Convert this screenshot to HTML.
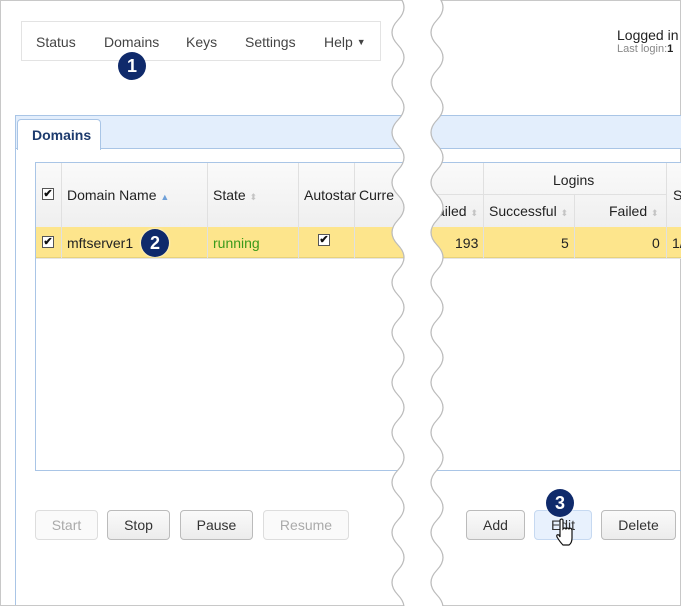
<!DOCTYPE html>
<html><head><meta charset="utf-8"><style>
*{box-sizing:border-box;margin:0;padding:0}
body{width:681px;height:606px;overflow:hidden;background:#fff;font-family:"Liberation Sans",Arial,sans-serif;font-size:14px;color:#333;position:relative}
.abs{position:absolute}
.frame{left:0;top:0;width:681px;height:606px;border:1px solid #c8c8c8}
.nav{left:21px;top:21px;width:360px;height:40px;border:1px solid #e3e3e3;background:#fff}
.nav span{position:absolute;top:12px;font-size:14px;color:#444}
.badge{position:absolute;width:28px;height:28px;border-radius:50%;background:#0f2a6b;color:#fff;font-weight:bold;font-size:18px;text-align:center;line-height:28px;box-shadow:0 0 2px #fff}
.panel{left:15px;top:115px;width:680px;height:490px;border:1px solid #a9c5e6;border-right:none;border-bottom:none}
.phead{left:16px;top:116px;width:665px;height:33px;background:#e3eefc;border-bottom:1px solid #a9c5e6}
.tab{left:17px;top:119px;width:84px;height:31px;background:#fff;border:1px solid #a9c5e6;border-bottom:none;border-radius:4px 4px 0 0;font-weight:bold;color:#1d3b6e;font-size:14px;padding:7px 0 0 14px}
.table{left:35px;top:162px;width:660px;height:309px;border:1px solid #a9c5e6;border-right:none}
.hdr{left:36px;top:163px;width:645px;height:64px;background:linear-gradient(#fafafa,#efefef)}
.row{left:36px;top:227px;width:645px;height:31px;background:#fde58c;border-bottom:1px solid #e8d27a}
.vl{position:absolute;width:1px;background:#e0e0e0}
.cb{position:absolute;width:12px;height:12px;border:1px solid #555;background:#fff;font-size:11px;line-height:10px;text-align:center;color:#111;font-weight:bold}
.t{position:absolute;font-size:14px;color:#222;white-space:nowrap}
.sort{color:#c4c4c4;font-size:9px}
.btn{position:absolute;top:510px;height:30px;border:1px solid #bbb;border-radius:4px;background:linear-gradient(#fafafa,#ececec);text-align:center;line-height:28px;font-size:14px;color:#333}
.dis{color:#aaa;border-color:#ddd;background:#fafafa}
</style></head><body>
<div class="abs frame"></div>
<div class="abs nav">
<span style="left:14px">Status</span><span style="left:82px">Domains</span><span style="left:164px">Keys</span><span style="left:223px">Settings</span><span style="left:302px">Help <span style="font-size:9px;position:relative;top:-2px">▼</span></span>
</div>
<div class="badge" style="left:118px;top:52px">1</div>
<div class="t" style="left:617px;top:27px;font-size:14px">Logged in</div>
<div class="t" style="left:617px;top:43px;font-size:11px;color:#888">Last login:<b style="color:#222">1</b></div>

<div class="abs panel"></div>
<div class="abs phead"></div>
<div class="abs tab">Domains</div>
<div class="abs table"></div>
<div class="abs hdr"></div>
<div class="abs row"></div>
<div class="abs" style="left:36px;top:258px;width:645px;height:1px;background:#e5e5e5"></div>
<div class="vl" style="left:61px;top:163px;height:95px"></div>
<div class="vl" style="left:207px;top:163px;height:95px"></div>
<div class="vl" style="left:298px;top:163px;height:95px"></div>
<div class="vl" style="left:354px;top:163px;height:95px"></div>
<div class="vl" style="left:483px;top:163px;height:95px"></div>
<div class="vl" style="left:574px;top:194px;height:64px"></div>
<div class="vl" style="left:666px;top:163px;height:95px"></div>
<div class="abs" style="left:437px;top:194px;width:229px;height:1px;background:#e0e0e0"></div>
<div class="cb" style="left:42px;top:188px">✔</div>
<div class="t" style="left:67px;top:187px">Domain Name <span style="color:#6fa0d8;font-size:9px">▲</span></div>
<div class="t" style="left:213px;top:187px">State <span class="sort">⬍</span></div>
<div class="t" style="left:304px;top:187px">Autostar</div>
<div class="t" style="left:359px;top:187px">Curre</div>
<div class="t" style="left:437px;top:203px">ailed <span class="sort">⬍</span></div>
<div class="t" style="left:553px;top:172px">Logins</div>
<div class="t" style="left:489px;top:203px">Successful <span class="sort">⬍</span></div>
<div class="t" style="left:609px;top:203px">Failed <span class="sort">⬍</span></div>
<div class="t" style="left:673px;top:187px">S</div>
<div class="cb" style="left:42px;top:236px">✔</div>
<div class="t" style="left:67px;top:235px">mftserver1</div>
<div class="badge" style="left:141px;top:229px">2</div>
<div class="t" style="left:213px;top:235px;color:#3a9a1a">running</div>
<div class="cb" style="left:318px;top:234px">✔</div>
<div class="t" style="left:455px;top:235px">193</div>
<div class="t" style="left:561px;top:235px">5</div>
<div class="t" style="left:652px;top:235px">0</div>
<div class="t" style="left:672px;top:235px">1/</div>

<div class="btn dis" style="left:35px;width:63px">Start</div>
<div class="btn" style="left:107px;width:63px">Stop</div>
<div class="btn" style="left:180px;width:73px">Pause</div>
<div class="btn dis" style="left:263px;width:86px">Resume</div>
<div class="btn" style="left:466px;width:59px">Add</div>
<div class="btn" style="left:534px;width:58px;background:#e8f1fd;border-color:#c6d9f1">Edit</div>
<div class="btn" style="left:601px;width:75px">Delete</div>
<div class="badge" style="left:546px;top:489px">3</div>
<svg class="abs" style="left:555px;top:518px" width="22" height="30" viewBox="0 0 22 30"><path d="M5 2 q2-2 3 0 v9 q2-2 3 0 q2-2 3 0 q2-2 3 1 v8 q0 5-3 7 h-6 q-3-3-6-8 q-1-3 2-2 l1 2z" fill="#fff" stroke="#111" stroke-width="1.2"/></svg>

<svg class="abs" style="left:0;top:0" width="681" height="606">
<path d="M398 -5 Q410 7.5 398 20 T398 45 T398 70 T398 95 T398 120 T398 145 T398 170 T398 195 T398 220 T398 245 T398 270 T398 295 T398 320 T398 345 T398 370 T398 395 T398 420 T398 445 T398 470 T398 495 T398 520 T398 545 T398 570 T398 595 T398 620 L420 620 L420 -5Z" fill="#fff"/>
<path d="M437 -5 Q449 7.5 437 20 T437 45 T437 70 T437 95 T437 120 T437 145 T437 170 T437 195 T437 220 T437 245 T437 270 T437 295 T437 320 T437 345 T437 370 T437 395 T437 420 T437 445 T437 470 T437 495 T437 520 T437 545 T437 570 T437 595 T437 620 L415 620 L415 -5Z" fill="#fff"/>
<path d="M398 -5 Q410 7.5 398 20 T398 45 T398 70 T398 95 T398 120 T398 145 T398 170 T398 195 T398 220 T398 245 T398 270 T398 295 T398 320 T398 345 T398 370 T398 395 T398 420 T398 445 T398 470 T398 495 T398 520 T398 545 T398 570 T398 595 T398 620" fill="none" stroke="#bbb" stroke-width="1.2"/>
<path d="M437 -5 Q449 7.5 437 20 T437 45 T437 70 T437 95 T437 120 T437 145 T437 170 T437 195 T437 220 T437 245 T437 270 T437 295 T437 320 T437 345 T437 370 T437 395 T437 420 T437 445 T437 470 T437 495 T437 520 T437 545 T437 570 T437 595 T437 620" fill="none" stroke="#bbb" stroke-width="1.2"/>
</svg>
</body></html>
